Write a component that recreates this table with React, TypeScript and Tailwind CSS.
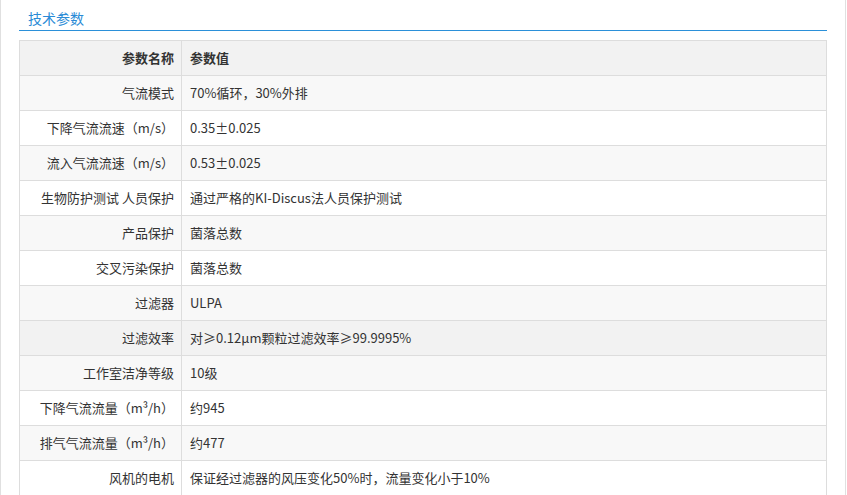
const ROWS: [string, string][] = [
  ['气流模式', '70%循环，30%外排'],
  ['下降气流流速（m/s）', '0.35±0.025'],
  ['流入气流流速（m/s）', '0.53±0.025'],
  ['生物防护测试 人员保护', '通过严格的KI-Discus法人员保护测试'],
  ['产品保护', '菌落总数'],
  ['交叉污染保护', '菌落总数'],
  ['过滤器', 'ULPA'],
  ['过滤效率', '对≥0.12μm颗粒过滤效率≥99.9995%'],
  ['工作室洁净等级', '10级'],
  ['下降气流流量（m³/h）', '约945'],
  ['排气气流流量（m³/h）', '约477'],
  ['风机的电机', '保证经过滤器的风压变化50%时，流量变化小于10%'],
];

export default function App() {
  return (
    <div
      className="w-[846px] h-[495px] overflow-hidden border-x border-[#e0e0e0] bg-white px-[18px] text-[13px] text-[#333]"
      style={{ fontFamily: '"Noto Sans CJK SC", "Noto Sans", sans-serif' }}
    >
      {/* Section title */}
      <div className="border-b border-[#2b90d9] pt-[8px] pb-[2px] pl-[9px] text-[14px] leading-[20px] text-[#2a8bd6]">
        技术参数
      </div>

      {/* Params table */}
      <table className="mt-[9px] w-[808px] border-collapse table-fixed">
        <colgroup>
          <col className="w-[162px]" />
          <col />
        </colgroup>
        <thead>
          <tr className="h-[35px] bg-[#f2f2f2]">
            <th className="border border-[#ddd] px-[7px] text-right font-bold">参数名称</th>
            <th className="border border-[#ddd] px-[8px] text-left font-bold">参数值</th>
          </tr>
        </thead>
        <tbody>
          {ROWS.map(([name, value], i) => (
            <tr
              key={name}
              className={`h-[35px] ${i === 7 ? 'bg-[#f2f2f2]' : i % 2 === 0 ? 'bg-[#f8f8f8]' : 'bg-white'}`}
            >
              <td className="border border-[#ddd] px-[7px] text-right whitespace-nowrap">{name}</td>
              <td className="border border-[#ddd] px-[8px] text-left whitespace-nowrap">{value}</td>
            </tr>
          ))}
        </tbody>
      </table>
    </div>
  );
}
